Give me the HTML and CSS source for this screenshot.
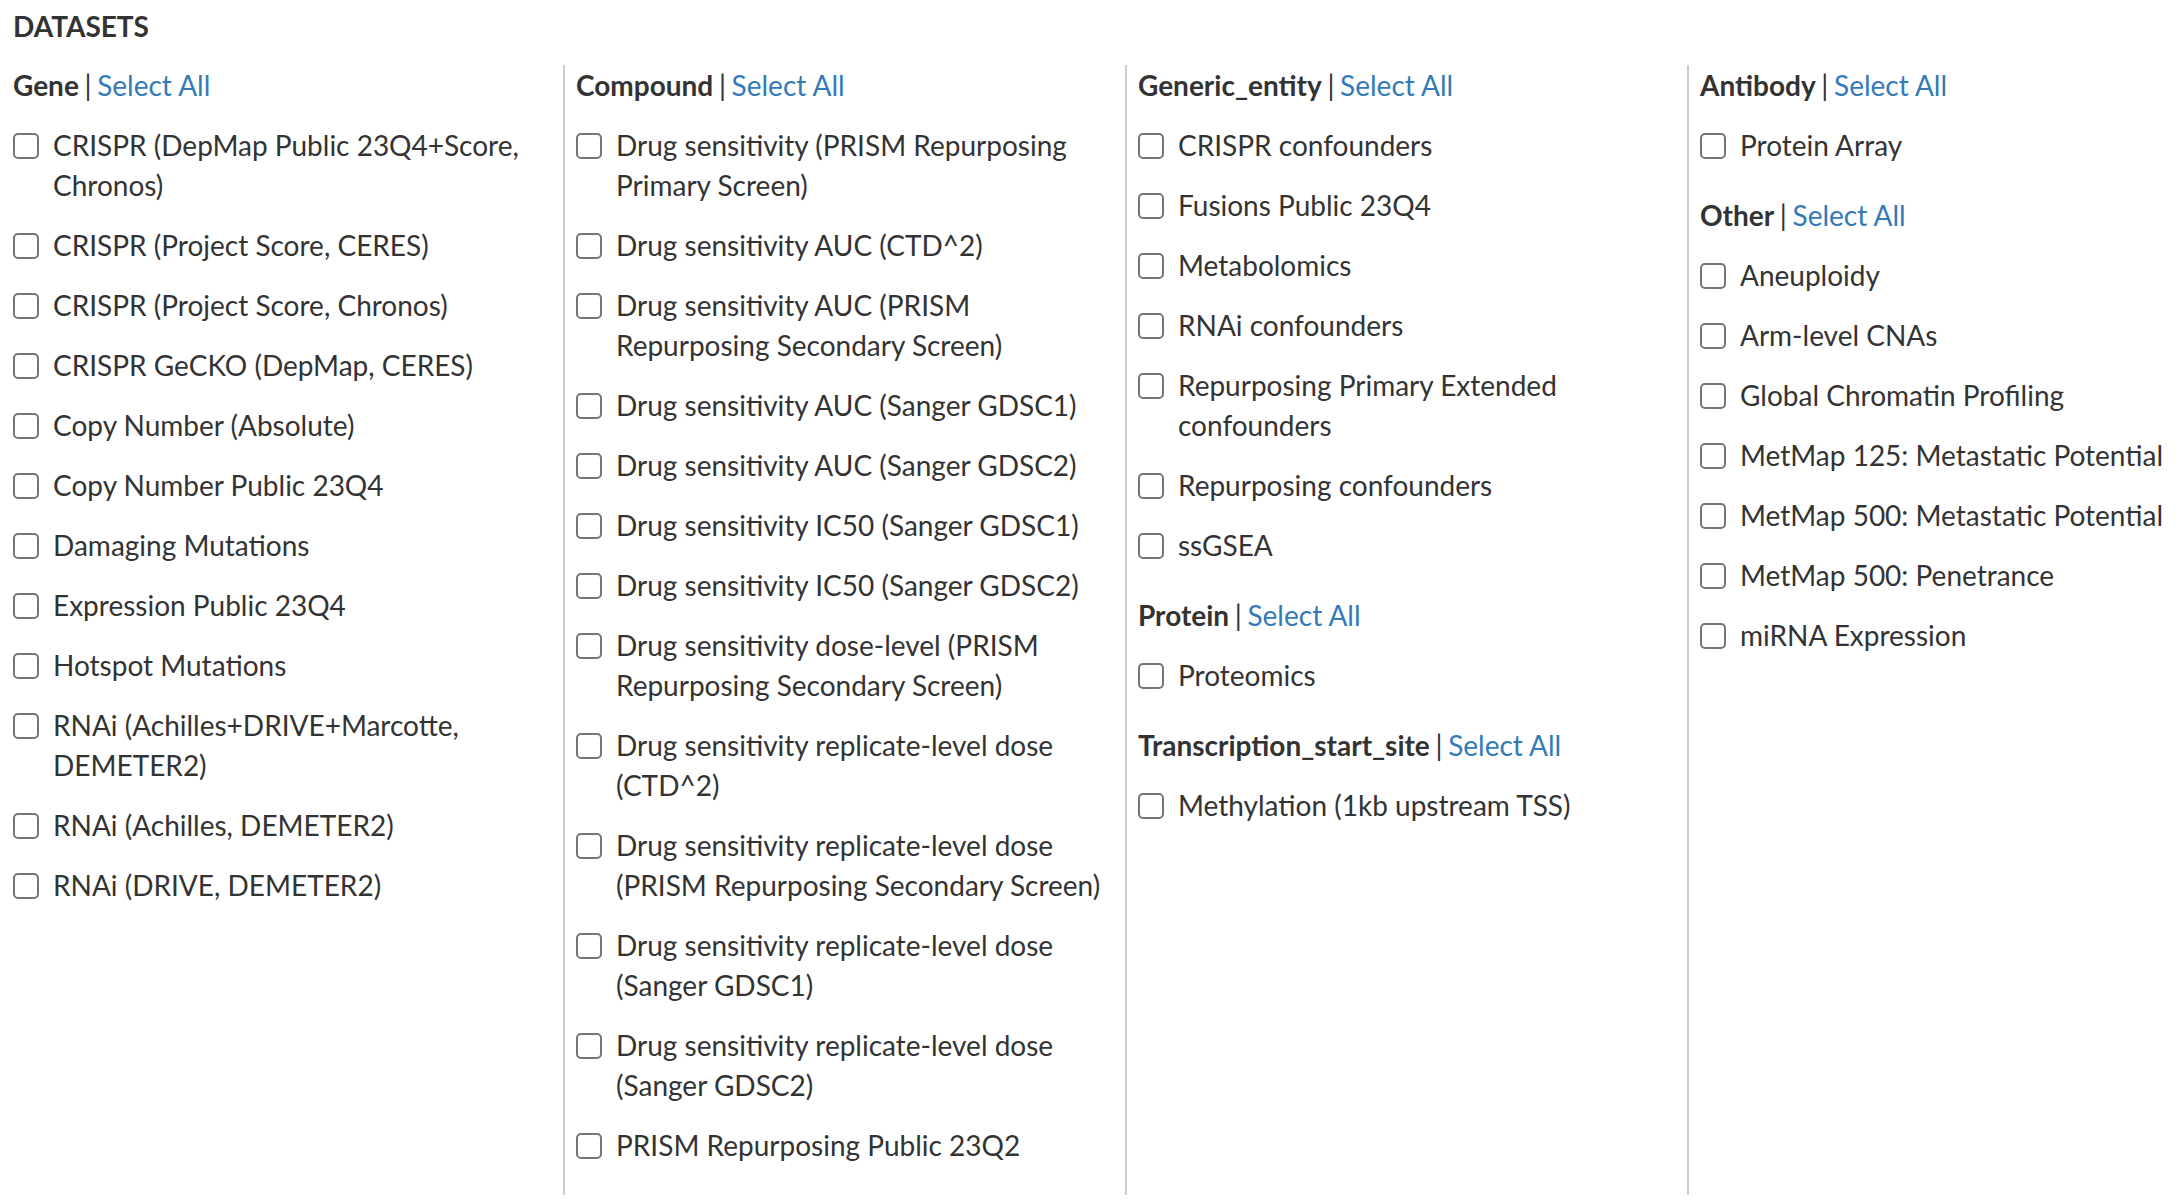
FILE: index.html
```html
<!DOCTYPE html>
<html lang="en">
<head>
<meta charset="utf-8">
<title>Datasets</title>
<link rel="stylesheet" href="styles.css">
</head>
<body>
<div class="page">
  <div class="title">DATASETS</div>
  <div class="cols">
    <div class="col">
      <div class="section">
        <div class="head"><b>Gene</b> | <a class="sel">Select All</a></div>
        <label class="opt"><input type="checkbox" class="cb"><span>CRISPR (DepMap Public 23Q4+Score, Chronos)</span></label>
        <label class="opt"><input type="checkbox" class="cb"><span>CRISPR (Project Score, CERES)</span></label>
        <label class="opt"><input type="checkbox" class="cb"><span>CRISPR (Project Score, Chronos)</span></label>
        <label class="opt"><input type="checkbox" class="cb"><span>CRISPR GeCKO (DepMap, CERES)</span></label>
        <label class="opt"><input type="checkbox" class="cb"><span>Copy Number (Absolute)</span></label>
        <label class="opt"><input type="checkbox" class="cb"><span>Copy Number Public 23Q4</span></label>
        <label class="opt"><input type="checkbox" class="cb"><span>Damaging Mutations</span></label>
        <label class="opt"><input type="checkbox" class="cb"><span>Expression Public 23Q4</span></label>
        <label class="opt"><input type="checkbox" class="cb"><span>Hotspot Mutations</span></label>
        <label class="opt"><input type="checkbox" class="cb"><span>RNAi (Achilles+DRIVE+Marcotte, DEMETER2)</span></label>
        <label class="opt"><input type="checkbox" class="cb"><span>RNAi (Achilles, DEMETER2)</span></label>
        <label class="opt"><input type="checkbox" class="cb"><span>RNAi (DRIVE, DEMETER2)</span></label>
      </div>
    </div>
    <div class="col">
      <div class="section">
        <div class="head"><b>Compound</b> | <a class="sel">Select All</a></div>
        <label class="opt"><input type="checkbox" class="cb"><span>Drug sensitivity (PRISM Repurposing Primary Screen)</span></label>
        <label class="opt"><input type="checkbox" class="cb"><span>Drug sensitivity AUC (CTD^2)</span></label>
        <label class="opt"><input type="checkbox" class="cb"><span>Drug sensitivity AUC (PRISM Repurposing Secondary Screen)</span></label>
        <label class="opt"><input type="checkbox" class="cb"><span>Drug sensitivity AUC (Sanger GDSC1)</span></label>
        <label class="opt"><input type="checkbox" class="cb"><span>Drug sensitivity AUC (Sanger GDSC2)</span></label>
        <label class="opt"><input type="checkbox" class="cb"><span>Drug sensitivity IC50 (Sanger GDSC1)</span></label>
        <label class="opt"><input type="checkbox" class="cb"><span>Drug sensitivity IC50 (Sanger GDSC2)</span></label>
        <label class="opt"><input type="checkbox" class="cb"><span>Drug sensitivity dose-level (PRISM Repurposing Secondary Screen)</span></label>
        <label class="opt"><input type="checkbox" class="cb"><span>Drug sensitivity replicate-level dose (CTD^2)</span></label>
        <label class="opt"><input type="checkbox" class="cb"><span>Drug sensitivity replicate-level dose (PRISM Repurposing Secondary Screen)</span></label>
        <label class="opt"><input type="checkbox" class="cb"><span>Drug sensitivity replicate-level dose (Sanger GDSC1)</span></label>
        <label class="opt"><input type="checkbox" class="cb"><span>Drug sensitivity replicate-level dose (Sanger GDSC2)</span></label>
        <label class="opt"><input type="checkbox" class="cb"><span>PRISM Repurposing Public 23Q2</span></label>
      </div>
    </div>
    <div class="col">
      <div class="section">
        <div class="head"><b>Generic_entity</b> | <a class="sel">Select All</a></div>
        <label class="opt"><input type="checkbox" class="cb"><span>CRISPR confounders</span></label>
        <label class="opt"><input type="checkbox" class="cb"><span>Fusions Public 23Q4</span></label>
        <label class="opt"><input type="checkbox" class="cb"><span>Metabolomics</span></label>
        <label class="opt"><input type="checkbox" class="cb"><span>RNAi confounders</span></label>
        <label class="opt"><input type="checkbox" class="cb"><span>Repurposing Primary Extended confounders</span></label>
        <label class="opt"><input type="checkbox" class="cb"><span>Repurposing confounders</span></label>
        <label class="opt"><input type="checkbox" class="cb"><span>ssGSEA</span></label>
      </div>
      <div class="section">
        <div class="head"><b>Protein</b> | <a class="sel">Select All</a></div>
        <label class="opt"><input type="checkbox" class="cb"><span>Proteomics</span></label>
      </div>
      <div class="section">
        <div class="head"><b>Transcription_start_site</b> | <a class="sel">Select All</a></div>
        <label class="opt"><input type="checkbox" class="cb"><span>Methylation (1kb upstream TSS)</span></label>
      </div>
    </div>
    <div class="col">
      <div class="section">
        <div class="head"><b>Antibody</b> | <a class="sel">Select All</a></div>
        <label class="opt"><input type="checkbox" class="cb"><span>Protein Array</span></label>
      </div>
      <div class="section">
        <div class="head"><b>Other</b> | <a class="sel">Select All</a></div>
        <label class="opt"><input type="checkbox" class="cb"><span>Aneuploidy</span></label>
        <label class="opt"><input type="checkbox" class="cb"><span>Arm-level CNAs</span></label>
        <label class="opt"><input type="checkbox" class="cb"><span>Global Chromatin Profiling</span></label>
        <label class="opt"><input type="checkbox" class="cb"><span>MetMap 125: Metastatic Potential</span></label>
        <label class="opt"><input type="checkbox" class="cb"><span>MetMap 500: Metastatic Potential</span></label>
        <label class="opt"><input type="checkbox" class="cb"><span>MetMap 500: Penetrance</span></label>
        <label class="opt"><input type="checkbox" class="cb"><span>miRNA Expression</span></label>
      </div>
    </div>
  </div>
</div>
</body>
</html>
```

FILE: styles.css
```css
html, body {
  margin: 0;
  padding: 0;
  background: #ffffff;
  overflow: hidden;
}

body {
  font-family: Lato, "Open Sans", "Liberation Sans", sans-serif;
  font-size: 28px;
  line-height: 40px;
  color: #333333;
}

.page {
  padding-top: 6px;
}

.title {
  font-weight: 700;
  padding-left: 13px;
  margin-bottom: 19px;
}

.cols {
  display: grid;
  grid-template-columns: 563px 562px 562px 562px;
  width: 2249px;
}

.col {
  border-left: 2px solid #cccccc;
  padding: 0 12px 30px 11px;
  display: flex;
  flex-direction: column;
}

.col:first-child {
  border-left-color: transparent;
}

.section + .section {
  margin-top: 30px;
}

.head {
  white-space: nowrap;
  word-spacing: -1.5px;
}

.head b {
  font-weight: 700;
}

.sel {
  color: #337ab7;
  text-decoration: none;
  cursor: pointer;
  word-spacing: 0;
}

.opt {
  display: flex;
  align-items: flex-start;
  gap: 14px;
  margin-top: 20px;
  cursor: pointer;
}

.cb {
  appearance: none;
  -webkit-appearance: none;
  flex: 0 0 26px;
  width: 26px;
  height: 26px;
  margin: 8px 0 0 0;
  border: 2px solid #767676;
  border-radius: 5px;
  background: #ffffff;
  box-sizing: border-box;
}
```
